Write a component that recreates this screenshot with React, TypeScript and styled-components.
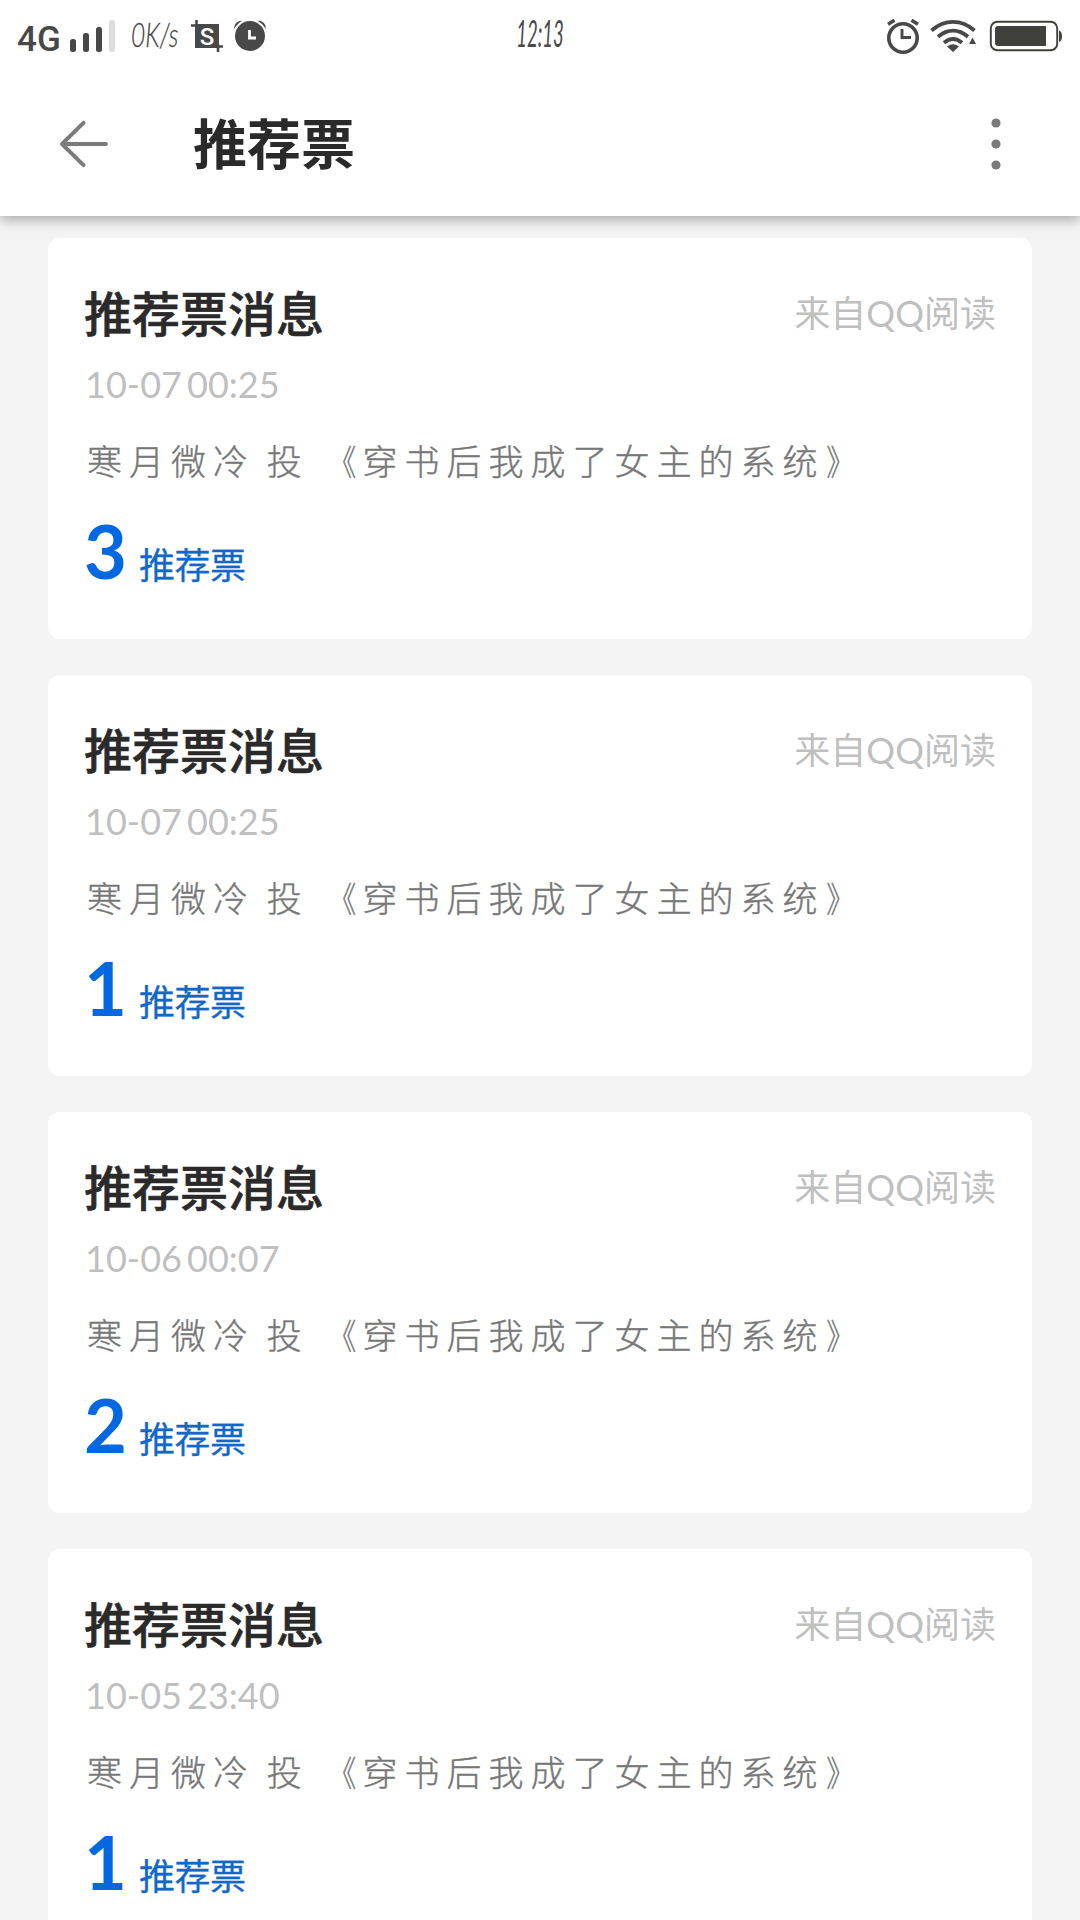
import React from "react";
import styled, { createGlobalStyle } from "styled-components";

const GlobalStyle = createGlobalStyle`
  * { box-sizing: border-box; }
  body {
    margin: 0;
    background: #f4f4f4;
    font-family: Lato, "Noto Sans CJK SC", sans-serif;
  }
`;

const Screen = styled.div`
  width: 1080px;
  height: 1920px;
  overflow: hidden;
  display: flex;
  flex-direction: column;
  background: #f4f4f4;
`;

const Top = styled.header`
  flex: none;
  height: 216px;
  background: #fff;
  box-shadow: 0 3px 13px rgba(0, 0, 0, 0.34);
  z-index: 1;
`;

const StatusBar = styled.div`
  height: 72px;
  display: grid;
  grid-template-columns: 1fr auto 1fr;
  align-items: start;
  color: #484848;
`;

const StatusGroup = styled.div<{ $end?: boolean }>`
  display: flex;
  align-items: flex-start;
  justify-content: ${(p) => (p.$end ? "flex-end" : "flex-start")};
  height: 72px;
`;

const Network = styled.span`
  flex: none;
  width: 69px;
  padding: 20px 0 0 17px;
  font: 500 35px/40px Roboto, sans-serif;
  white-space: nowrap;
`;

const Speed = styled.span`
  flex: none;
  width: 58px;
  margin-left: -2px;
  padding-top: 14px;
  font: 300 italic 34px/40px Lato, sans-serif;
  white-space: nowrap;
  transform: scaleX(0.72);
  transform-origin: left;
  -webkit-text-stroke: 0.3px #484848;
`;

const Clock = styled.span`
  width: 46px;
  padding-top: 13px;
  display: flex;
  justify-content: center;
  font: 400 italic 37px/40px Lato, sans-serif;
  white-space: nowrap;
  transform: scaleX(0.5);
`;

const TitleBar = styled.div`
  height: 144px;
  display: flex;
  align-items: center;
`;

const IconButton = styled.button`
  border: 0;
  padding: 0;
  background: none;
  display: flex;
  svg { display: block; }
`;

const Heading = styled.h1`
  flex: 1;
  margin: 1px 0 0 83px;
  color: #2a2a2a;
  font-size: 54px;
  line-height: 72px;
  font-weight: 700;
`;

const List = styled.main`
  padding: 22px 48px 0;
  display: flex;
  flex-direction: column;
  gap: 36px;
`;

const Card = styled.article`
  flex: none;
  height: 401px;
  padding: 46px 36px 0;
  border-radius: 12px;
  background: #fff;
`;

const CardHead = styled.div`
  display: flex;
  align-items: flex-start;
  justify-content: space-between;
  height: 60px;
`;

const CardTitle = styled.h2`
  margin: 0;
  color: #2a2a2a;
  font-size: 48px;
  line-height: 60px;
  font-weight: 500;
  -webkit-text-stroke: 0.6px #2a2a2a;
`;

const Source = styled.span`
  color: #bfbfbf;
  font-size: 36px;
  line-height: 58px;
`;

const Time = styled.time`
  display: block;
  margin: 17px 0 0 1px;
  color: #bfbfbf;
  font-size: 36px;
  line-height: 46px;
  word-spacing: -4px;
`;

const Message = styled.p`
  margin: 28px 0 0 3px;
  color: #777;
  font-family: "Noto Sans CJK SC", sans-serif;
  font-weight: 300;
  font-size: 35px;
  line-height: 50px;
  letter-spacing: 7px;
  word-spacing: -3px;
  white-space: nowrap;
  -webkit-text-stroke: 0.4px #777;
`;

const Bracket = styled.span<{ $shift: number }>`
  display: inline-block;
  transform: translateX(${(p) => p.$shift}px) scaleX(0.8);
`;

const Votes = styled.div`
  display: flex;
  align-items: baseline;
  gap: 12px;
  margin-top: 22px;
  color: #0168e2;
`;

const Count = styled.strong`
  font-size: 74px;
  line-height: 88px;
  font-weight: 700;
`;

const Unit = styled.span`
  color: #1268c8;
  font-size: 36px;
  font-weight: 400;
  letter-spacing: -0.5px;
  -webkit-text-stroke: 0.3px #1268c8;
  line-height: 50px;
`;

const messages = [
  { time: "10-07 00:25", count: 3 },
  { time: "10-07 00:25", count: 1 },
  { time: "10-06 00:07", count: 2 },
  { time: "10-05 23:40", count: 1 },
];

const LeftIcons = () => (
  <svg width="64" height="72" viewBox="0 0 64 72">
    <rect x="1" y="39" width="6" height="13" rx="2.5" fill="#484848" />
    <rect x="14" y="33" width="6" height="19" rx="2.5" fill="#484848" />
    <rect x="27" y="27" width="6" height="25" rx="2.5" fill="#484848" />
    <rect x="40" y="20" width="6" height="32" rx="2.5" fill="#dedede" />
  </svg>
);

const ShotLetter = styled.text`
  font: 500 24px Roboto, sans-serif;
  fill: #fff;
`;

const ShotIcon = () => (
  <svg width="36" height="72" viewBox="-2 0 36 72">
    <path d="M4 24h24v24H4z" fill="#484848" />
    <path d="M0 25.500h8M5.500 20v8M23 46.500h9M27 44v8" stroke="#484848" strokeWidth="2.600" />
    <ShotLetter x="16" y="44.500" textAnchor="middle">S</ShotLetter>
  </svg>
);

const AlarmSolid = () => (
  <svg width="50" height="72" viewBox="0 0 50 72">
    <path d="M9.500 29.500A7 7 0 0 1 18 21zM40.500 29.500A7 7 0 0 0 32 21z" fill="#484848" />
    <circle cx="25" cy="36" r="16" fill="#484848" stroke="#fff" strokeWidth="2" />
    <path d="M24.500 30v8H31" fill="none" stroke="#fff" strokeWidth="2.800" />
  </svg>
);

const RightIcons = () => (
  <svg width="196" height="72" viewBox="884 0 196 72" fill="none">
    <circle cx="903" cy="38" r="14.200" stroke="#484848" strokeWidth="3.600" />
    <path d="M902 29v8.500h9" stroke="#484848" strokeWidth="2.900" />
    <path d="M888 24.300l6.500-4M911.500 20.300l6.500 4" stroke="#484848" strokeWidth="3.400" />
    <path
      d="M931.500 30.500c13-11.500 30-11.500 43 0M938 36.800c9.500-8 20.500-8 30 0M944 42.800c5.800-4.800 12.200-4.800 18 0"
      stroke="#484848" strokeWidth="3.900"
    />
    <path d="M947 46.600c4-3.300 8-3.300 12 0L953 52zM969 44l3.500-6.500L976 44z" fill="#484848" />
    <rect x="990.800" y="21.800" width="66.400" height="28.400" rx="6.500" stroke="#40413c" strokeWidth="1.900" />
    <path d="M998 26h48v20h-48a3 3 0 0 1-3-3V29a3 3 0 0 1 3-3z" fill="#40413c" />
    <path d="M1059 30.500c4 1 4 10.500 0 11.500z" fill="#40413c" />
  </svg>
);

export default function App() {
  return (
    <>
      <GlobalStyle />
      <Screen>
        <Top>
          <StatusBar>
            <StatusGroup>
              <Network>4G</Network>
              <LeftIcons />
              <Speed>0K/s</Speed>
              <ShotIcon />
              <AlarmSolid />
            </StatusGroup>
            <Clock>12:13</Clock>
            <StatusGroup $end>
              <RightIcons />
            </StatusGroup>
          </StatusBar>
          <TitleBar>
            <IconButton aria-label="back">
              <svg width="110" height="72" viewBox="0 0 110 72" fill="none">
                <path
                  d="M83.500 14.800L62 36l21.500 21.200M62 36h44"
                  stroke="#7b7b7b" strokeWidth="3.900" strokeLinecap="round" strokeLinejoin="round"
                />
              </svg>
            </IconButton>
            <Heading>推荐票</Heading>
            <IconButton aria-label="more">
              <svg width="100" height="72" viewBox="980 0 100 72" fill="#7b7b7b">
                <circle cx="996" cy="15" r="4.600" />
                <circle cx="996" cy="36" r="4.600" />
                <circle cx="996" cy="57" r="4.600" />
              </svg>
            </IconButton>
          </TitleBar>
        </Top>
        <List>
          {messages.map((m, i) => (
            <Card key={i}>
              <CardHead>
                <CardTitle>推荐票消息</CardTitle>
                <Source>来自QQ阅读</Source>
              </CardHead>
              <Time>{m.time}</Time>
              <Message>
                寒月微冷 投 <Bracket $shift={4}>《</Bracket>
                穿书后我成了女主的系统<Bracket $shift={-3}>》</Bracket>
              </Message>
              <Votes>
                <Count>{m.count}</Count>
                <Unit>推荐票</Unit>
              </Votes>
            </Card>
          ))}
        </List>
      </Screen>
    </>
  );
}
